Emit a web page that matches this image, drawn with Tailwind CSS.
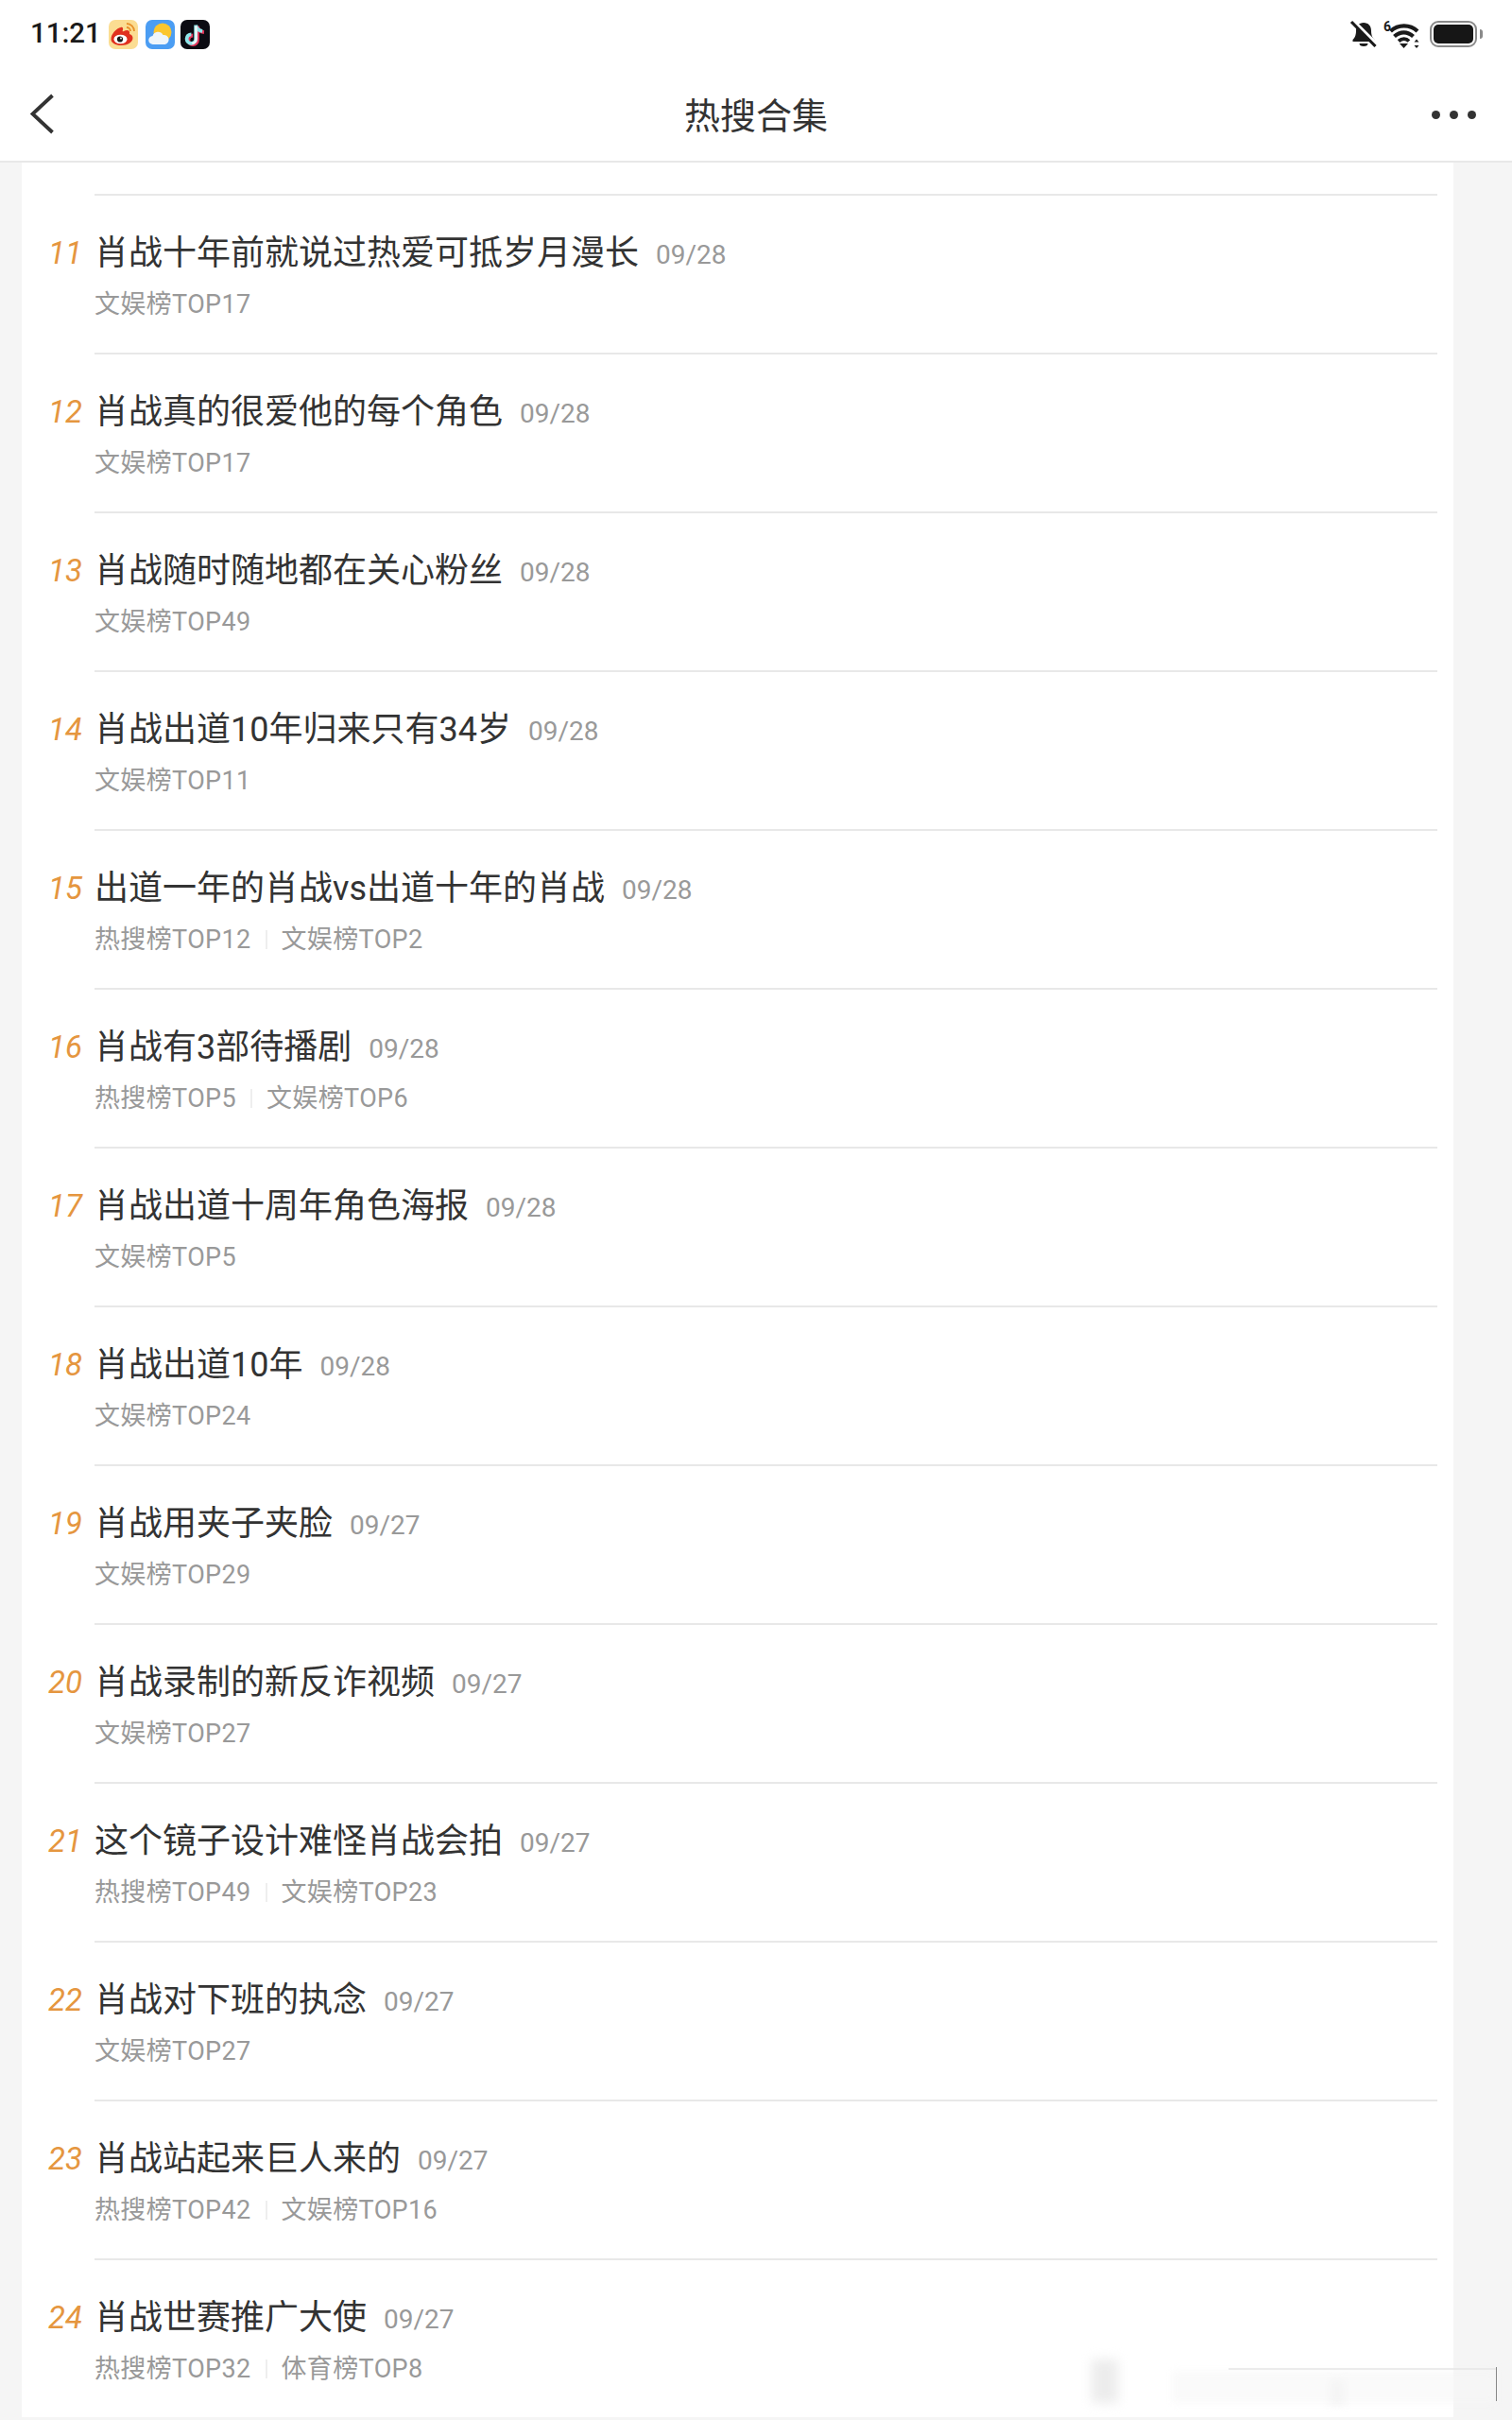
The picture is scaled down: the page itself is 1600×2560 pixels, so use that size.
<!DOCTYPE html>
<html lang="zh-CN">
<head>
  <meta charset="UTF-8" />
  <title>热搜合集</title>
  <script src="https://cdn.jsdelivr.net/npm/@tailwindcss/browser@4"></script>
</head>
<body class="bg-[#f5f5f5] h-[2560px] overflow-hidden relative [font-family:Roboto,'Noto_Sans_CJK_SC',sans-serif]">

  <!-- Status bar + nav -->
  <header class="bg-white h-[172px] border-b-2 border-[#e8e8e8]">
    <div class="h-[72px] flex items-center justify-between pl-[32px] pr-[31px]">
      <div class="flex items-center">
        <span class="text-[29.5px] font-medium text-[#1a1a1a] leading-none mr-[8px]">11:21</span>
        <svg width="31" height="31" viewBox="0 0 31 31" class="mr-[8px]">
          <rect width="31" height="31" rx="7" fill="#fbdd92"/>
          <path d="M13 8C8 9 2.500 15 2.500 20.500c0 4 5 6.500 10.500 6.500 7 0 12.500-3.500 12.500-8 0-2.500-2-3.500-3.500-4 1-3.500-2-5-6-3-1.500.7-1.500 0-1-1.500.5-2-.5-3.500-2.500-2.500z" fill="#e0301e"/>
          <ellipse cx="12.500" cy="20.500" rx="7" ry="4.800" fill="#fff"/>
          <circle cx="12" cy="20.500" r="3.100" fill="#1a1a1a"/>
          <circle cx="13" cy="19.500" r=".9" fill="#fff"/>
          <path d="M19 4a8 8 0 0 1 8 8M19 8a4 4 0 0 1 4 4" stroke="#e8912a" stroke-width="1.800" fill="none"/>
        </svg>
        <svg width="31" height="31" viewBox="0 0 31 31" class="mr-[6px]">
          <rect width="31" height="31" rx="7" fill="#4b9df3"/>
          <circle cx="18" cy="13" r="9.500" fill="#fbc62e"/>
          <path d="M8 26a4.500 4.500 0 0 1-.5-9 6 6 0 0 1 11-1 5 5 0 0 1 2 10z" fill="#eef5fb"/>
        </svg>
        <svg width="31" height="31" viewBox="0 0 31 31">
          <rect width="31" height="31" rx="7" fill="#0b0b12"/>
          <path d="M17 6v14.500a4.800 4.800 0 1 1-4.800-4.800M17 6c.5 3.500 3 6 7 6.300" stroke="#e8355a" stroke-width="3.800" fill="none" transform="translate(1 .8)"/>
          <path d="M17 6v14.500a4.800 4.800 0 1 1-4.800-4.800M17 6c.5 3.500 3 6 7 6.300" stroke="#8fe6ea" stroke-width="3.800" fill="none" transform="translate(-.8 -.4)"/>
          <path d="M16.500 6.500v14a4.200 4.200 0 0 1-4.200 4.200" stroke="#f3f6f6" stroke-width="2.400" fill="none"/>
        </svg>
      </div>
      <div class="flex items-center">
        <svg width="30" height="30" viewBox="0 0 30 30" class="mr-[6px]">
          <path d="M15 3c-5 0-8 3.500-8 8.500 0 5-1.500 7.500-3.500 9.500v2h23v-2c-2-2-3.500-4.500-3.500-9.500C23 6.500 20 3 15 3z" fill="#1a1a1a"/>
          <path d="M10.500 25h9a4.500 3 0 0 1-9 0z" fill="#1a1a1a"/>
          <path d="M4 1.500 28.500 26" stroke="#fff" stroke-width="4.500"/>
          <path d="M2 2 27.500 28" stroke="#1a1a1a" stroke-width="3.200"/>
        </svg>
        <svg width="40" height="32" viewBox="0 0 40 32" class="mr-[9px] overflow-visible">
          <text x="0" y="13" font-size="14" font-weight="700" fill="#1a1a1a">6</text>
          <path d="M7.500 13C15.500 5.500 28 5.500 36 13" stroke="#1a1a1a" stroke-width="4.200" fill="none"/>
          <path d="M11.500 18.500c6-5.500 14-5.500 20 0" stroke="#1a1a1a" stroke-width="4.200" fill="none"/>
          <path d="M16 23.500c3.500-3 8-3 11 0" stroke="#1a1a1a" stroke-width="3.800" fill="none"/>
          <path d="M17 26h9l-4.500 5z" fill="#1a1a1a"/>
          <path d="M35 21.500l2.500 3h-5zM35 31l2.500-3h-5z" fill="#1a1a1a"/>
        </svg>
        <div class="flex items-center">
          <div class="w-[50px] h-[28px] rounded-[9px] border-[2.5px] border-[#8a8a8a] p-[2px]">
            <div class="w-full h-full rounded-[5px] bg-[#161616]"></div>
          </div>
          <div class="w-[3px] h-[10px] rounded-r-[3px] bg-[#8a8a8a] ml-[3px]"></div>
        </div>
      </div>
    </div>
    <div class="h-[98px] relative flex items-center justify-between pl-[32px] pr-[38px]">
      <svg width="26" height="44" viewBox="0 0 26 44">
        <path d="M23.500 2 2.500 21.500 23.500 41" stroke="#333" stroke-width="3.800" fill="none"/>
      </svg>
      <h1 class="absolute left-0 right-0 top-[27px] text-center text-[38px] leading-[48px] font-normal text-[#333]">热搜合集</h1>
      <div class="flex gap-[10px]">
        <span class="w-[9px] h-[9px] rounded-full bg-[#333]"></span>
        <span class="w-[9px] h-[9px] rounded-full bg-[#333]"></span>
        <span class="w-[9px] h-[9px] rounded-full bg-[#333]"></span>
      </div>
    </div>
  </header>

  <!-- List card -->
  <main id="list" class="bg-white ml-[23px] w-[1515px] pt-[33px] pl-[15px] pr-[17px]"></main>

  <!-- Blurred watermark over the bottom right -->
  <div class="absolute left-[1155px] top-[2496px] w-[28px] h-[46px] bg-[#ececec] blur-[6px]"></div>
  <div class="absolute left-[1407px] top-[2518px] w-[16px] h-[25px] bg-[#f2f2f2] blur-[5px]"></div>
  <div class="absolute left-[1240px] top-[2508px] w-[343px] h-[34px] bg-[#f6f6f6]/60 blur-[4px]"></div>
  <div class="absolute left-[1300px] top-[2505px] w-[283px] h-[2px] bg-[#e6e6e6]/80"></div>
  <div class="absolute left-[1583px] top-[2504px] w-[1px] h-[36px] bg-[#888]"></div>

  <script>
    const rows = [
      [11, "肖战十年前就说过热爱可抵岁月漫长", "09/28", ["文娱榜TOP17"]],
      [12, "肖战真的很爱他的每个角色", "09/28", ["文娱榜TOP17"]],
      [13, "肖战随时随地都在关心粉丝", "09/28", ["文娱榜TOP49"]],
      [14, "肖战出道10年归来只有34岁", "09/28", ["文娱榜TOP11"]],
      [15, "出道一年的肖战vs出道十年的肖战", "09/28", ["热搜榜TOP12", "文娱榜TOP2"]],
      [16, "肖战有3部待播剧", "09/28", ["热搜榜TOP5", "文娱榜TOP6"]],
      [17, "肖战出道十周年角色海报", "09/28", ["文娱榜TOP5"]],
      [18, "肖战出道10年", "09/28", ["文娱榜TOP24"]],
      [19, "肖战用夹子夹脸", "09/27", ["文娱榜TOP29"]],
      [20, "肖战录制的新反诈视频", "09/27", ["文娱榜TOP27"]],
      [21, "这个镜子设计难怪肖战会拍", "09/27", ["热搜榜TOP49", "文娱榜TOP23"]],
      [22, "肖战对下班的执念", "09/27", ["文娱榜TOP27"]],
      [23, "肖战站起来巨人来的", "09/27", ["热搜榜TOP42", "文娱榜TOP16"]],
      [24, "肖战世赛推广大使", "09/27", ["热搜榜TOP32", "体育榜TOP8"]],
    ];

    const sep = `<span class="w-[2px] h-[20px] bg-[#eeeeee] mx-[15px]"></span>`;

    document.getElementById('list').innerHTML = rows.map(([num, title, date, tags]) => `
      <div class="flex">
        <div class="w-[62px] pt-[39px] text-center text-[33px] leading-[48px] italic text-[#e5963f]">${num}</div>
        <div class="flex-1 h-[168px] border-t-2 border-[#e8e8e8] pt-[37px]">
          <div class="flex items-center h-[48px]">
            <span class="text-[36px] leading-[48px] text-[#333]">${title}</span>
            <span class="text-[28px] leading-[48px] text-[#999] ml-[18px] mt-[4px]">${date}</span>
          </div>
          <div class="flex items-center h-[34px] mt-[13px] text-[27px] leading-[34px] tracking-[0.35px] text-[#999]">
            ${tags.map(t => `<span>${t}</span>`).join(sep)}
          </div>
        </div>
      </div>
    `).join("");
  </script>
</body>
</html>
